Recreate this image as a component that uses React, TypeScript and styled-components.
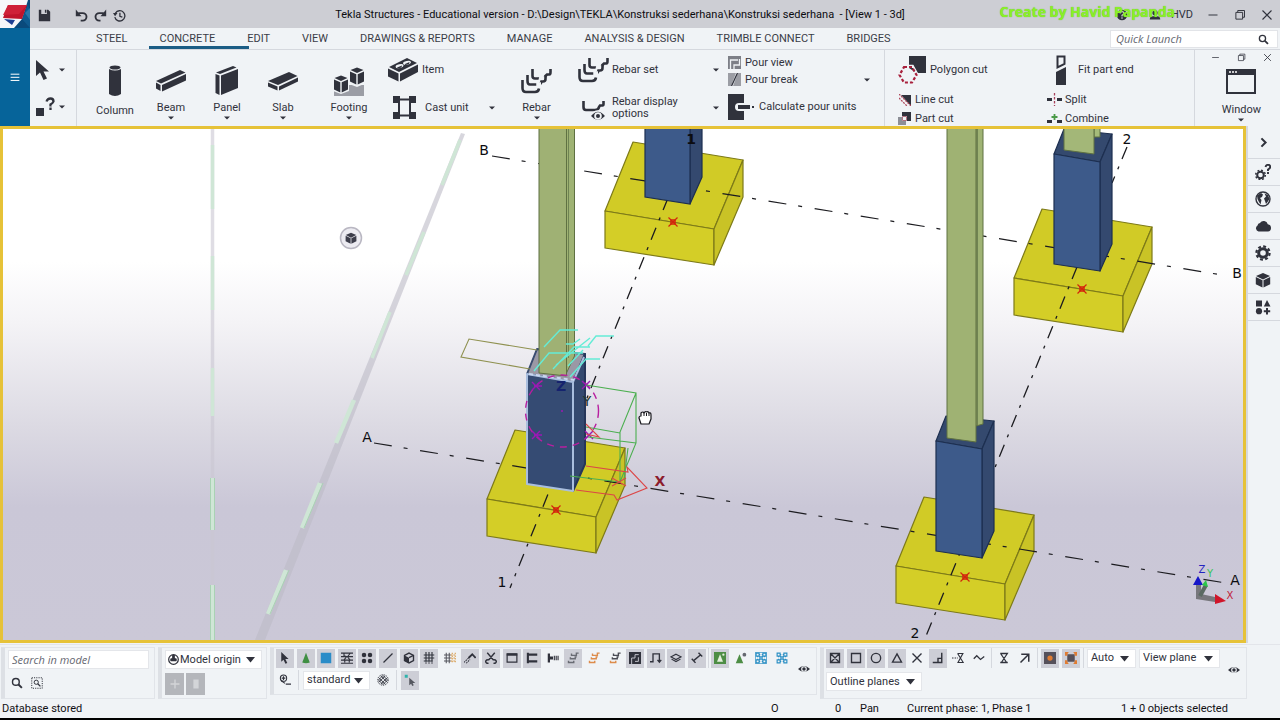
import React, { ReactNode } from "react";
import styled, { createGlobalStyle, css } from "styled-components";

const ink = "#30323c";
const panel = "#f0f3f6";
const line = "#d5d8de";
const pressed = "#cdced6";
const humanist = `"Open Sans", "Noto Sans", sans-serif`;

const GlobalStyle = createGlobalStyle`
  * { box-sizing: border-box; }
  body { margin: 0; background: ${panel}; color: ${ink}; font: 11px/14px Roboto, "Noto Sans", sans-serif; }
  button, input, select { font: inherit; color: inherit; border: 0; padding: 0; margin: 0; background: none; }
  svg { display: block; flex: none; }
`;

/* ---------- page frame ---------- */

const Page = styled.div`
  display: flex;
  flex-direction: column;
  min-height: 100vh;
  min-width: 1240px;
`;
const Header = styled.header`
  display: flex;
  flex: none;
`;
const Brand = styled.div`
  display: flex;
  flex-direction: column;
  width: 30px;
  background: #06649a;
`;
const FileMenu = styled.button`
  flex: 1;
  display: grid;
  place-items: center;
  color: #fff;
`;
const HeaderMain = styled.div`
  flex: 1;
  min-width: 0;
`;

/* ---------- title bar ---------- */

const TitleBar = styled.div`
  position: relative;
  display: flex;
  align-items: center;
  height: 28px;
  padding-top: 2px;
  background: #cdced4;
`;
const QuickAccess = styled.div`
  display: flex;
  align-items: center;
  gap: 6px;
  width: 120px;
  padding-left: 8px;
`;
const QuickButton = styled.button<{ $wideAfter?: boolean }>`
  margin-right: ${(p) => (p.$wideAfter ? 18 : 0)}px;
`;
const Title = styled.h1`
  flex: 1;
  margin: 0;
  padding-right: 14px;
  font: inherit;
  line-height: 26px;
  color: #0c0c10;
  text-align: center;
  white-space: pre;
`;
const Account = styled.div`
  display: flex;
  align-items: center;
  width: 176px;
`;
const AccountIcon = styled.span`
  margin: 0 5px 0 12px;
`;
const UserIcon = styled.span`
  margin: 0 10px 0 16px;
`;
const UserName = styled.span`
  width: 36px;
`;
const Watermark = styled.span`
  position: absolute;
  right: 105px;
  top: 3px;
  font: bold 14px/18px ${humanist};
  color: #8af028;
  text-shadow: 0 0 1px #5fb81c;
  white-space: nowrap;
`;
const WindowButtons = styled.div<{ $small?: boolean }>`
  display: flex;
  gap: ${(p) => (p.$small ? 17 : 15)}px;
  ${(p) =>
    p.$small &&
    css`
      padding: 2px 0 7px 0;
    `}
`;

/* ---------- tabs ---------- */

const TabBar = styled.nav`
  display: flex;
  align-items: center;
  height: 22px;
  padding: 1px 2px 0 50px;
  border-bottom: 1px solid ${line};
`;
const Tab = styled.button<{ $active?: boolean }>`
  position: relative;
  padding: 0 16px;
  line-height: 20px;
  color: #3b3d47;
  white-space: nowrap;
  ${(p) =>
    p.$active &&
    css`
      &::after {
        content: "";
        position: absolute;
        left: 5px;
        bottom: 0;
        width: 100px;
        height: 3px;
        background: #1b5d85;
      }
    `}
`;
const QuickLaunch = styled.label`
  display: flex;
  align-items: center;
  width: 168px;
  height: 18px;
  margin-left: auto;
  padding: 0 8px 0 5px;
  background: #fff;
  border: 1px solid #e2e4e8;
`;
const ItalicInput = styled.input`
  flex: 1;
  min-width: 0;
  font: italic 11px/16px ${humanist};
  outline: 0;
  &::placeholder {
    color: #666872;
    opacity: 1;
  }
`;

/* ---------- ribbon ---------- */

const Ribbon = styled.div`
  display: flex;
  height: 76px;
`;
const RibbonGroup = styled.section<{ $grow?: boolean; $pad?: number }>`
  display: flex;
  padding: 1px 0 0 ${(p) => p.$pad ?? 0}px;
  border-right: 1px solid ${line};
  ${(p) => p.$grow && "flex: 1;"}
  &:last-child {
    border-right: 0;
  }
`;
const SelectTools = styled.div`
  display: grid;
  grid-template-rows: 37px 37px;
  width: 46px;
  padding-left: 6px;
`;
const ToolButton = styled.button`
  display: flex;
  align-items: center;
  justify-content: space-between;
  width: 29px;
`;
const BigButton = styled.button<{ $w: number }>`
  display: flex;
  flex-direction: column;
  align-items: center;
  width: ${(p) => p.$w}px;
  padding-top: 12px;
`;
const BigIcon = styled.span`
  display: grid;
  place-items: center;
  height: 36px;
`;
const PlainLabel = styled.span`
  padding-top: 5px;
`;
const SplitLabel = styled.span`
  display: flex;
  flex-direction: column;
  align-items: center;
  gap: 1px;
  padding-top: 2px;
`;
const Stack = styled.div<{ $w: number }>`
  display: flex;
  flex-direction: column;
  gap: 1px;
  width: ${(p) => p.$w}px;
`;
const RowButton = styled.button<{ $h: number }>`
  display: flex;
  align-items: center;
  height: ${(p) => p.$h}px;
  text-align: left;
  line-height: 12px;
`;
const RowIcon = styled.span<{ $w: number }>`
  display: grid;
  place-items: center;
  width: ${(p) => p.$w}px;
  margin-right: 3px;
`;
const RowArrow = styled.span`
  margin-left: auto;
`;
const PourStack = styled(Stack)`
  gap: 0;
  margin: 0 14px 0 8px;
  padding-top: 3px;
`;
const CutGrid = styled.div`
  display: grid;
  grid-template-columns: 150px auto;
  grid-template-rows: 38px 21px 17px;
  justify-content: start;
`;
const WindowPanel = styled.div`
  display: flex;
  flex-direction: column;
  align-items: center;
  width: 85px;
  padding-left: 8px;
`;
const WindowButton = styled.button`
  display: flex;
  flex-direction: column;
  align-items: center;
  gap: 7px;
`;

/* ---------- work area ---------- */

const WorkArea = styled.main`
  display: flex;
  flex: 1;
  min-height: 518px;
  padding-bottom: 1px;
`;
const Viewport = styled.section`
  flex: 1;
  min-width: 0;
  display: flex;
  border: 3px solid #e6c238;
  background: linear-gradient(#fff 0%, #fff 26%, #f4f3f6 38%, #dcdae3 58%, #cac7d7 74%, #cbc8d7 100%);
`;
const Scene = styled.svg`
  flex: 1;
  width: 100%;
  min-width: 0;
  font: 14px/1 "DejaVu Sans", sans-serif;
`;
const SideBar = styled.aside`
  display: flex;
  flex-direction: column;
  width: 34px;
  border-left: 2px solid ${line};
`;
const SideButton = styled.button`
  display: grid;
  place-items: center;
  height: 27px;
  padding-right: 2px;
  border-bottom: 1px solid ${line};
  &:first-child {
    height: 33px;
  }
`;

/* ---------- bottom tool bars ---------- */

const BottomBar = styled.div`
  display: flex;
  align-items: flex-start;
  height: 54px;
  padding: 2px 0 0 1px;
  border-top: 1px solid #e3e5ea;
`;
const DockPanel = styled.section<{ $w: number; $h: number; $tight?: boolean }>`
  display: flex;
  flex-direction: column;
  width: ${(p) => p.$w}px;
  height: ${(p) => p.$h}px;
  margin-right: 3px;
  padding: ${(p) => (p.$tight ? 0 : 2)}px 3px 0 ${(p) => (p.$tight ? 2 : 3)}px;
  border: 1px solid #e1e4e9;
  border-left: 4px solid #dde0e5;
  gap: 4px;
`;
const DockColumns = styled.div`
  display: flex;
  align-items: center;
  justify-content: space-between;
`;
const DockRows = styled.div<{ $gap: number }>`
  display: flex;
  flex-direction: column;
  gap: ${(p) => p.$gap}px;
`;
const SearchField = styled.label`
  display: flex;
  width: 141px;
  height: 19px;
  padding: 0 3px;
  background: #fff;
  border: 1px solid #e4e6ea;
`;
const ButtonRow = styled.div<{ $gap?: number }>`
  display: flex;
  align-items: center;
  gap: ${(p) => p.$gap ?? 2}px;
`;
const SpreadRow = styled.div<{ $w: number }>`
  display: flex;
  justify-content: space-between;
  width: ${(p) => p.$w}px;
`;
const IconButton = styled.button<{ $on?: boolean }>`
  display: grid;
  place-items: center;
  width: 18px;
  height: 19px;
  background: ${(p) => (p.$on ? pressed : "none")};
`;
const DisabledButton = styled(IconButton)`
  width: 19px;
  height: 22px;
  background: #b4b6bb;
  color: #d3d5d8;
`;
const Divider = styled.span`
  width: 1px;
  height: 20px;
  background: ${line};
`;
const SelectBox = styled.label<{ $w: number }>`
  position: relative;
  display: flex;
  align-items: center;
  width: ${(p) => p.$w}px;
  height: 19px;
  padding-left: 2px;
  background: #fff;
  border: 1px solid #e4e6ea;
  select {
    flex: 1;
    min-width: 0;
    height: 17px;
    padding-left: 1px;
    appearance: none;
    outline: 0;
  }
`;
const SelectArrow = styled.svg`
  position: absolute;
  right: 6px;
  top: 6px;
  pointer-events: none;
`;

/* ---------- status bar ---------- */

const StatusBar = styled.footer`
  display: grid;
  grid-template-columns: 1fr 64px 25px 47px 214px 159px;
  height: 22px;
  padding: 1px 0 0 2px;
  border-bottom: 2px solid #000;
  line-height: 20px;
  color: #101014;
`;

/* ---------- icons ---------- */

const cube = (
  <g>
    <path d="M8 1 15 4 8 7.500 1 4z" />
    <path d="M.8 5 7.500 8.300V15.500L.8 12.200z" />
    <path d="M15.200 5 8.500 8.300V15.500L15.200 12.200z" />
  </g>
);
const stroke = (d: string, w = 1.5, c = "currentColor") => <path d={d} fill="none" stroke={c} strokeWidth={w} />;
const eye = (
  <g>
    <path d="M0 8Q8 0 16 8 8 16 0 8z" />
    <circle cx="8" cy="8" r="3.800" fill="#f0f3f6" />
    <circle cx="8" cy="8" r="2.300" />
  </g>
);
const bars = (a: string, b: string) => (
  <g fill="none" strokeWidth="1.900">
    <path d="M6 2V4.500H12.500V1.500H15.500" stroke={a} />
    <path d="M4.500 7V9H11V6.500H13" stroke={a} />
    <path d="M2 11.500V14H9V11.500" stroke={b} />
  </g>
);
const gear = (
  <g>
    <circle cx="8" cy="8" r="4.300" fill="none" stroke="currentColor" strokeWidth="3" />
    <circle cx="8" cy="8" r="6.600" fill="none" stroke="currentColor" strokeWidth="2.200" strokeDasharray="2.900 2.280" />
  </g>
);
const lens = (
  <g fill="none" stroke="currentColor" strokeWidth="1.900">
    <circle cx="6.500" cy="6.500" r="4.500" />
    <path d="M10 10 14.500 14.500" strokeWidth="2.600" />
  </g>
);
const pointer = <path d="M3 0V13L6 10.300 8.600 15.800 11 14.800 8.500 9.300H12.800z" />;
const snapGrid = (c: string) => (
  <g fill="none" stroke={c} strokeWidth="1.500">
    <path d="M1.500 1.500h4v4h-4zM10.500 1.500h4v4h-4zM1.500 10.500h4v4h-4zM10.500 10.500h4v4h-4zM5.500 3.500h1.500M9 3.500h1.500M5.500 12.500h1.500M9 12.500h1.500M3.500 5.500v1.500M3.500 9v1.500M12.500 5.500v1.500M12.500 9v1.500" />
    <path d="M5.500 5.500 7 7M10.500 5.500 9 7M5.500 10.500 7 9M10.500 10.500 9 9M6.500 6.500h3v3h-3z" />
  </g>
);
const rebar = (
  <g fill="none" stroke="currentColor" strokeWidth="2.600">
    <path d="M11.500 1V8Q11.500 10.500 14 10.500H21Q24 10.500 24.500 8L26 6.500H28.500Q29.500 6.500 29.500 4V1" />
    <path d="M6.500 7V13Q6.500 16 9 16H17Q20 16 20 13L20.500 11H24" stroke="#f0f3f6" strokeWidth="5.500" />
    <path d="M6.500 7V13Q6.500 16.500 9 16.500H17Q20 16.500 20.500 13.500H22Q24.500 13.500 24.500 11V7.500" />
    <path d="M1.500 13V20Q1.500 24 5 24H15Q18 24 18 21V17H20" stroke="#f0f3f6" strokeWidth="5.500" />
    <path d="M1.500 12V20Q1.500 24 5 24H14Q17.500 24 18 20.500" />
  </g>
);

const glyphs: Record<string, ReactNode> = {
  save: <path fillRule="evenodd" d="M1 1H4V6H11V1H12.500L15 3.500V15H1zM8.500 1H10.300V4.500H8.500z" />,
  undo: <g>{stroke("M4 5H9.500A4.600 4.600 0 0 1 9.500 14.300H7", 2.3)}<path d="M1 .5V8.800H8z" /></g>,
  redo: <g>{stroke("M12 5H6.500A4.600 4.600 0 0 0 6.500 14.300H8", 2.3)}<path d="M15 .5V8.800H8z" /></g>,
  history: <g>{stroke("M3 5A6.300 6.300 0 1 1 2.200 10M8.500 4.500V9L11.500 10", 1.6)}<path d="M0 5H5.500L2.500 9z" /></g>,
  help: <g><circle cx="8" cy="8" r="7" />{stroke("M5.500 6Q6 3.500 8 3.500 10.500 3.500 10.500 6 10 7.500 8 8.500V10M8 11V13", 1.6, "#cdced4")}</g>,
  user: <g><circle cx="8" cy="5" r="3.500" /><path d="M1 14Q1 9.500 5 9.500H11Q15 9.500 15 14z" /></g>,
  min: stroke("M2 8H14", 1.3),
  restore: stroke("M2.500 4.500H11.500V13.500H2.500zM5 4.500V2H14V11H11.500", 1.3),
  close: stroke("M2 2 14 14M14 2 2 14", 1.5),
  menu: stroke("M1 3.500H15M1 8.500H15M1 13.500H15", 1.6),
  search: lens,
  pointer,
  cube: <g>{cube}</g>,
  gear,
  eye,
  chevron: stroke("M5 2 11 8 5 14", 3),
  gearHelp: (
    <g>
      <circle cx="5.500" cy="11" r="3.300" fill="none" stroke="currentColor" strokeWidth="2" />
      <circle cx="5.500" cy="11" r="4.800" fill="none" stroke="currentColor" strokeWidth="1.500" strokeDasharray="1.900 1.870" />
      {stroke("M10.500 3Q11 .8 13 .8 15.300 .8 15.200 3.200 15 4.500 13 5.500V7M13 8V10", 1.9)}
    </g>
  ),
  globe: (
    <g>
      <circle cx="8" cy="8" r="7" fill="none" stroke="currentColor" strokeWidth="1.400" />
      <path d="M2 4.500 6 2 8 3.500 7 6 5 7 6.500 9 5.500 13.500 4 11 2.500 8zM9.500 2.500 13 4 14.500 8 12.500 11 11 13 10 10 9 7.500 11 5.500z" />
    </g>
  ),
  cloud: <path d="M3.500 13.500A3.300 3.300 0 0 1 2.500 7.500 3 3 0 0 1 5 5 4.300 4.300 0 0 1 12.800 6.200 3.700 3.700 0 0 1 13 13.500z" />,
  shapes: <g><path d="M1 1.500H7V7.500H1zM12 1 15.500 7.500H8.800zM11 9H13V11.200H15.200V13.200H13V15.400H11V13.200H8.800V11.200H11z" /><circle cx="4" cy="12.200" r="3.100" /></g>,
  areaSearch: <g><path d="M1 1H15V15H1z" fill="none" stroke="currentColor" strokeWidth="1.300" strokeDasharray="1.500 1.500" /><circle cx="7" cy="7" r="2.800" fill="none" stroke="currentColor" strokeWidth="1.300" />{stroke("M9 9 12.500 12.500", 1.8)}</g>,
  origin: <g><circle cx="8" cy="8" r="7" fill="none" stroke="currentColor" strokeWidth="1.800" /><path d="M6 1.500H10V6H12Q14 8.500 12 10.500H4Q2 8.500 4 6H6z" /></g>,
  plus: stroke("M8 2V14M2 8H14", 1.8),
  slab: <path d="M4.500 2H11.500V14H4.500z" />,
  cone: <path d="M8 1 13 14Q8 16 3 14z" fill="#3f8f43" />,
  blueBox: <path d="M1 1H15V15H1z" fill="#2a8cc8" />,
  waves: stroke("M0 1.500H16M0 6.200H16M0 10.800H16M0 15H16M4 2V5L7 6M12 2 9 6M4 10.500 7 7M12 10.500 9 7M5 14V11M11 14V11", 1.5),
  dots: <g><circle cx="4" cy="4" r="3" /><circle cx="12" cy="4" r="3" /><circle cx="4" cy="12" r="3" /><circle cx="12" cy="12" r="3" /></g>,
  slash: stroke("M2 14 14 2", 1.7),
  openCube: <g>{stroke("M2 4.500 8 1.500 14 4.500V11.500L8 14.500 2 11.500z", 1.8)}<path d="M2 4.500 8 7.500V14.500L2 11.500z" />{stroke("M8 7.500 14 4.500", 1.6)}</g>,
  grid: <g>{stroke("M4 0V13M8 0V13M12 0V13M1 4H15M1 8H15M1 12H13", 1.5)}<path d="M4 13V16M8 13V16M12 13V16" stroke="currentColor" strokeWidth="1" /></g>,
  gridDots: <g>{stroke("M3 1V15M7 1V15M0 4H9M0 8H9M0 12H9", 1.4, "#55565e")}<path d="M11 1V15M15 1V15M9 4H16M9 8H16M9 12H16" stroke="#d79a4a" strokeDasharray="2 1.500" fill="none" strokeWidth="1.400" /></g>,
  weld: <g>{stroke("M6 8 11 3 15.500 8", 2.4)}<path d="M0 14 7 7M3 15 8 10" stroke="currentColor" strokeWidth="1.400" strokeDasharray="2 1.200" /></g>,
  cut: stroke("M3 1 11.500 11M13 1 4.500 11M4.500 11A2.200 2.200 0 1 0 4.600 14.500M11.500 11A2.200 2.200 0 1 1 11.400 14.500", 1.9),
  view: <g>{stroke("M1.500 2.500H14.500V13.500H1.500z", 1.6)}<path d="M1 2H15V5H1z" /></g>,
  clamp: stroke("M2.500 1V15M3 3.500H15M3 12.500H15", 2.8),
  bolt: <g><path d="M1 2H4V14H1zM4 6H8V10H4zM9 5H10.500V11H9zM11.500 5H13V11H11.500zM14 5H15.500V11H14z" /></g>,
  barsGray: bars("#6a6c74", "#6a6c74"),
  barsOrange: bars("#dd8c4c", "#dd8c4c"),
  barsMixed: bars("#4a4c55", "#dd8c4c"),
  pour: <g><path d="M0 0H16V16H0z" />{stroke("M3.500 16V8H8V3.500H13M8 12.500H12.500V7", 1.2, "#cdced6")}</g>,
  hook: stroke("M0 13H4V2.500H12.500V13M10 10.500 12.500 13.500 15 10.500", 1.8),
  layers: stroke("M8 3 14.500 6.500 8 10 1.500 6.500zM2 9.500 8 12.800 14 9.500", 1.5),
  dimension: stroke("M3.500 11.500 12.500 4M1 9 6 14.500M10 1 15 6", 1.9),
  assembly: <g><path d="M0 0H16V16H0z" fill="#4d8d45" /><path d="M8 3 12 13H4z" fill="#e4f0dc" /><circle cx="12.500" cy="3.500" r="1.500" fill="#e4f0dc" /></g>,
  assemblyObj: <g><path d="M6 3 11 15H1z" fill="#4d8d45" /><circle cx="12.500" cy="3.500" r="2.500" fill="#666871" /></g>,
  snapAll: <g>{snapGrid("#2b8fc4")}<path d="M.5 .5H15.500V15.500H.5z" fill="none" stroke="#2b8fc4" /></g>,
  snapFew: snapGrid("#2b8fc4"),
  filter: <g><circle cx="6" cy="5.500" r="4.200" fill="none" stroke="currentColor" strokeWidth="1.400" />{stroke("M3.500 5.500H8.500M6 3V8M3 9 8 12.500M9 13.500H16", 1.5)}</g>,
  mesh: <g stroke="currentColor" strokeWidth="1.200" fill="none"><circle cx="8" cy="8" r="7" strokeDasharray="1.800 1.200" /><path d="M2.500 5 11 13.500M5 2.500 13.500 11M11 2.500 2.500 11M13.500 5 5 13.500M2 8 8 2 14 8 8 14z" /></g>,
  hover: <g><path d="M1 1H5V5H1z" fill="#2fb3ac" /><path d="M7 5V15L9.500 13 11 16 13 15 11.500 12H15z" fill="#55575f" /></g>,
  snapBox: stroke("M2 2H14V14H2zM2 2 14 14M14 2 2 14", 1.8),
  snapSquare: stroke("M2 2H14V14H2z", 1.8),
  snapCircle: <circle cx="8" cy="8" r="6.200" fill="none" stroke="currentColor" strokeWidth="1.800" />,
  snapTri: stroke("M8 2.500 14 13.500H2z", 1.8),
  snapX: stroke("M2 2 14 14M14 2 2 14", 1.8),
  perp: stroke("M13 1V14H1M13 8.500H8V14", 1.9),
  extension: <g>{stroke("M7.500 2H14.500L8 14H15L7.500 2", 1.5)}<path d="M0 8H8" stroke="currentColor" strokeWidth="1.500" strokeDasharray="2 1.500" /></g>,
  zigzag: stroke("M1 9 5 5 10 10 15 6", 1.7),
  hourglass: stroke("M3.500 2H12.500L4.500 14H11.500L3.500 2M3 2H13M3 14H13", 1.7),
  arrowUp: stroke("M3 3H13V13M13 3 2 14", 2),
  planeA: <g><path d="M0 0H16V16H0z" fill="#55505a" /><circle cx="8" cy="8" r="3.500" fill="#e07c32" /></g>,
  planeB: <g><path d="M3 3H13V13H3z" fill="#55505a" /><path d="M0 0H5L3 3V5H0zM16 0H11L13 3V5H16zM0 16H5L3 13V11H0zM16 16H11L13 13V11H16z" fill="#e07c32" /></g>,
};

const Glyph = ({ name, size = 12 }: { name: string; size?: number }) => (
  <svg width={size} height={size} viewBox="0 0 16 16" fill="currentColor" aria-hidden="true">
    {glyphs[name]}
  </svg>
);

const Art = ({ w, h, children }: { w: number; h: number; children: ReactNode }) => (
  <svg width={w} height={h} viewBox={`0 0 ${w} ${h}`} fill={ink} color={ink} aria-hidden="true">
    {children}
  </svg>
);

const Caret = () => (
  <svg width="6" height="4" viewBox="0 0 6 4" aria-hidden="true">
    <path d="M0 .5H6L3 3.500z" fill={ink} />
  </svg>
);

const art = {
  logo: (
    <svg width="30" height="28" viewBox="0 0 30 28" aria-hidden="true">
      <path d="M0 0H30V28H0z" fill="#f6f7fa" />
      <path d="M14 28 22 19 28 0H30V28z" fill="#0a4a7c" />
      <path d="M22 19 28 4 30 12V28z" fill="#0f5a8f" />
      <path d="M25 13 30 8V20z" fill="#2b77aa" />
      <path d="M8 5 27 5 22 19 3 18z" fill="#c0142c" />
      <path d="M8 5 27 5 19 14 3 15z" fill="#cf2038" />
      <path d="M4 19 15 20 12 25z" fill="#1e3f92" />
    </svg>
  ),
  column: <Art w={12} h={32}><path d="M0 4V29Q6 33 12 29V4Q6 7 0 4z" /><ellipse cx="6" cy="2.500" rx="5.500" ry="2" /></Art>,
  beam: (
    <Art w={32} h={24}>
      <path d="M1 12 25 1 30.500 3.500 6 14.500z" /><path d="M1 13.500 5.500 16V22L1 19.500z" /><path d="M7 16 31 5V11.500L7 22.500z" />
    </Art>
  ),
  panel: (
    <Art w={24} h={32}>
      <path d="M1 7.500 18 1 21.500 2.500 5 9z" /><path d="M.5 9 4.500 10.500V30L.5 28z" /><path d="M6 10.500 23 4V23L6 30z" />
    </Art>
  ),
  slab: (
    <Art w={32} h={20}>
      <path d="M1 10 22 1 30.500 5 11 14z" /><path d="M1 11.500 10.500 15.500V19.500L1 15.500z" /><path d="M12 15.500 31 6.500V10.500L12 19.500z" />
    </Art>
  ),
  footing: (
    <Art w={32} h={30}>
      <path d="M1 19H31V30H1z" fill="#9b9da5" />
      <path d="M16 3H31V18L24 21 16 18z" fill={panel} />
      <path d="M0 12H16V25L8 28 0 25z" fill={panel} />
      <path d="M24 1.500 30.500 4 24 7 17.500 4zM17 5.500 23.300 8.300V18.500L17 15.500zM31 5.500 24.700 8.300V18.500L31 15.500zM8 9.500 14.500 12 8 15 1.500 12zM1 13.500 7.300 16.300V26.500L1 23.500zM15 13.500 8.700 16.300V26.500L15 23.500z" />
    </Art>
  ),
  item: (
    <Art w={30} h={24}>
      <path d="M1 9 19 0 29 5 11 14z" /><path d="M0 10.500 10.500 15.500V23.500L0 18.500z" /><path d="M12 15.500 30 6.500V14L12 23.500z" />
      <ellipse cx="11.500" cy="8.200" rx="4" ry="1.900" fill={panel} transform="rotate(-12 11.500 8)" />
      <ellipse cx="19" cy="4.800" rx="4" ry="1.900" fill={panel} transform="rotate(-12 19 4.800)" />
      <path d="M9 9.500 14 7.500 13.500 9.500 10 10.500zM16.500 6.200 21.500 4 21 6.200 17.500 7z" />
    </Art>
  ),
  castUnit: (
    <Art w={23} h={23}>
      <path d="M0 0H7V7H0zM16 0H23V7H16zM0 16H7V23H0zM16 16H23V23H16z" />
      {stroke("M6 3V20M17 3V20M5 3.500H18M5 19.500H18", 2)}
    </Art>
  ),
  rebar: <Art w={31} h={26}>{rebar}</Art>,
  rebarDisplay: (
    <Art w={24} h={26}>
      {stroke("M1.500 6V12Q1.500 15 4 15H13Q16.500 15 17 12L18 10.500H20.500Q21.500 10.500 21.500 9V6", 2.6)}
      <path d="M8 21Q16 11 24 21 16 30 8 21z" stroke={panel} strokeWidth="1.500" />
      <circle cx="16" cy="21" r="3.800" fill={panel} /><circle cx="16" cy="21" r="2" />
    </Art>
  ),
  pourView: <Art w={13} h={13}><path d="M0 0H13V13H0z" fill="#7d7f87" />{stroke("M2.500 13V4H10M11.500 3V9H6V13", 1.3, panel)}</Art>,
  pourBreak: <Art w={13} h={13}><path d="M0 0H8L3 13H0zM10 0H13V13H5z" fill="#9b9da4" />{stroke("M9.500 0 3.500 13", 1.3)}</Art>,
  calcPour: (
    <Art w={27} h={26}>
      <path d="M0 0H16V9H11Q7 9 7 13T11 17H16V26H0z" /><path d="M10 11H22V15H10z" /><path d="M24 12H26V14H24z" />
    </Art>
  ),
  polygonCut: (
    <Art w={28} h={28}>
      <path d="M11 0H28V17H19L15 9H11z" />
      {stroke("M6 11H14L18.500 19 14 26.500H6L1.500 19z", 4.5, panel)}
      <path d="M11 12H15L17 16z" />
      <path d="M6 11H14L18.500 19 14 26.500H6L1.500 19z" fill="none" stroke="#a8203c" strokeWidth="2.200" strokeDasharray="3 2" />
    </Art>
  ),
  lineCut: <Art w={12} h={12}><path d="M2 1H12V12z" /><path d="M0 0 12 12M0 4 8 12" stroke="#b0485c" strokeWidth="1.300" strokeDasharray="2 1" /></Art>,
  partCut: <Art w={13} h={13}><path d="M0 5H4V9H8V13H0z" fill="#8d8f97" /><path d="M4 0H13V9H9V4H4z" />{stroke("M4.500 4.500H8.500V8.500H4.500z", 1, "#b07080")}</Art>,
  fitEnd: <Art w={10} h={30}>{stroke("M1.500 12.500V1.500H8.500V9z", 2)}<path d="M0 17 10 12V30H0z" /></Art>,
  split: <Art w={15} h={13}><path d="M0 5H5V8H0zM10 5H15V8H10z" /><path d="M7.500 0V13" stroke="#a8405a" strokeWidth="1.300" strokeDasharray="2.500 1.500" /></Art>,
  combine: <Art w={15} h={13}><path d="M0 8H5V11H0zM10 8H15V11H10z" />{stroke("M7.500 2V8M4.500 5H10.500", 1.8, "#4a9a48")}</Art>,
  window: (
    <Art w={30} h={25}>
      {stroke("M1 1H29V24H1z", 2)}<path d="M0 0H30V6H0z" />
      <path d="M3 3H5M6 3H8M9 3H11" stroke="#fff" strokeWidth="1.500" />
    </Art>
  ),
  pointer: <Art w={14} h={20}><path d="M0 0V16L4 12.500 7.500 20 11 18.500 7.500 11.500H13z" /></Art>,
  inquire: (
    <Art w={19} h={20}>
      <path d="M0 11H8V19H0z" />
      {stroke("M10.500 4.500Q11.500 1.500 14.500 1.500 17.500 1.500 17.500 4.500 17 6 14.500 7.500V9.500M14.500 10.500V13", 2.3)}
    </Art>
  ),
};

/* ---------- model scene ---------- */

const Footing = ({ x, y }: { x: number; y: number }) => (
  <g transform={`translate(${x} ${y})`} stroke="#7d7a18" strokeWidth="1.200" strokeLinejoin="round">
    <path d="M28-69 138-51 109 18 0 0z" fill="#d1cb26" />
    <path d="M0 0 109 18V54L0 37z" fill="#d4ce27" />
    <path d="M138-51V-14L109 54V18z" fill="#c9c326" />
  </g>
);
const Cross = ({ x, y }: { x: number; y: number }) => (
  <g transform={`translate(${x} ${y})`} stroke="#d3240c" fill="none">
    <path d="M-4.500-4.500 4.500 4.500M4.500-4.500-4.500 4.500" strokeWidth="1.200" />
    <path d="M-2-2H2V2H-2z" strokeWidth="1.500" />
  </g>
);
const Pedestal = ({ x, y, selected }: { x: number; y: number; selected?: boolean }) => (
  <g transform={`translate(${x} ${y})`} stroke={selected ? "#a9bede" : "#1d2f50"} strokeWidth={selected ? 2 : 1.2} strokeLinejoin="round">
    <path d="M40-124 50-149 98-144 86-116z" fill={selected ? "#9a98a5" : "#34496e"} stroke={selected ? "#3a4c70" : "#1d2f50"} />
    <path d="M86-116 98-144V-34L86-7z" fill="#34496f" stroke={selected ? "#26365a" : "#1d2f50"} />
    <path d="M40-124 86-116V-7L40-14z" fill={selected ? "#354b73" : "#3d5a8a"} />
    {selected && <path d="M86-116 97-141" fill="none" />}
  </g>
);
const gridDash = { stroke: "#1c1c20", strokeWidth: 1.2, strokeDasharray: "18 12 4 12.700", fill: "none" };
const steepDash = { stroke: "#1c1c20", strokeWidth: 1.3, strokeDasharray: "13 8 3 8", fill: "none" };

const ModelScene = () => (
  <Scene viewBox="3 129 1240 511" preserveAspectRatio="xMidYMid slice" role="img" aria-label="3d model view">
    {/* clip plane edges */}
    <g fill="none" stroke="#cac7d2" strokeOpacity=".6">
      <path d="M212.500 129V640" strokeWidth="3.500" />
      <path d="M461 133 255 640 265 640 465 134z" fill="#bdbac7" fillOpacity=".6" stroke="none" />
    </g>
    <g stroke="#cfe6d6" strokeWidth="3.500">
      <path d="M212.500 145V209M212.500 256V310M212.500 368V416M212.500 478V530M212.500 585V640" />
      <path d="M460 140 442 185M424 232 406 275M390 312 372 358" />
      <path d="M354 400 336 443M320 483 302 528M286 570 268 614" strokeWidth="4.500" />
    </g>
    <g stroke="#a9d2b4" strokeWidth="1">
      <path d="M210.500 478V530M214.500 478V530M210.500 585V640M214.500 585V640M323 483 304 528M289 570 270 614" />
    </g>

    <Footing x={605} y={211} />
    <Footing x={1014} y={278} />
    <Footing x={487} y={499} />
    <Footing x={896} y={566} />

    <path d="M492 156 1222 275" {...gridDash} />
    <path d="M374 443 1226 583" {...gridDash} />
    <path d="M668 198 510 588" {...steepDash} />
    <path d="M1127 147 1112 183M1077 267 926 636" {...steepDash} />

    <Cross x={673} y={222} />
    <Cross x={1082} y={289} />
    <Cross x={556} y={510} />
    <Cross x={965} y={577} />

    <g stroke="#1d2f50" strokeWidth="1.200">
      <path d="M690 120H702V177L690 204z" fill="#34496f" />
      <path d="M645 120H690V204L645 197z" fill="#3d5a8a" />
    </g>
    <Pedestal x={1014} y={278} />
    <Pedestal x={487} y={498} selected />
    <Pedestal x={896} y={565} />

    {/* steel posts */}
    <g stroke="#5f7142" strokeWidth="1">
      <path d="M566 120H574.500V356L566 374z" fill="#9fb374" />
      <path d="M539 120H566.500V376L539 373z" fill="#9fb174" />
      <path d="M568.500 129V358" stroke="#6f8352" />
      <path d="M976 120H983V424L976 426z" fill="#9fb374" />
      <path d="M947 120H976V442L947 438z" fill="#9fb273" />
      <path d="M977.500 129V425" stroke="#6f8352" />
      <path d="M1094 120H1100V137H1094z" fill="#a5bb7a" />
      <path d="M1064 120H1094V154L1064 150z" fill="#a3b778" />
    </g>

    {/* selection handles and dimensions */}
    <g fill="none" strokeWidth="1.100">
      <path d="M537 350 469 339 461 357 530 369" stroke="#8f9150" />
      <path d="M544 347 560 330H578M566 344H573L580 339M588 346 596 336H614M556 365 590 338M534 371 549 353H583M600 359H586L570 377M553 369 574 347H590M568 366 583 350" stroke="#64ecd6" strokeWidth="1.400" />
      <path d="M529 374 574 380" stroke="#c8d6ee" strokeDasharray="4 3" strokeWidth="2" />
      <ellipse cx="562" cy="411" rx="36.500" ry="36" stroke="#b81fa0" strokeWidth="1.400" strokeDasharray="7 6" />
      <path d="M532 382 540 390M540 382 532 390M534 386H542M532 431 540 439M540 431 532 439M534 435H542M582 381 590 389M590 381 582 389M585 431 593 439M593 431 585 439M561 411H563" stroke="#9a19b4" strokeWidth="1.400" />
      <path d="M586 385 636 393V443L620 482V432L636 393M586 427 620 433M588 437 636 443M620 482 570 476M624 480 628 448" stroke="#4caf50" />
      <path d="M586 466 628 472 627 467 647 488 617 500 614 495 576 490M586 424 599 437 586 434M612 478 626 486M626 478 612 486" stroke="#dc4747" />
    </g>

    <g fill="#0c0c10" textAnchor="middle">
      <text x="484" y="155">B</text>
      <text x="1237" y="278">B</text>
      <text x="367" y="442">A</text>
      <text x="1235" y="585">A</text>
      <text x="502" y="587">1</text>
      <text x="691" y="144" fontWeight="bold">1</text>
      <text x="1127" y="144">2</text>
      <text x="915" y="638">2</text>
      <text x="660" y="486" fill="#8c1c2c" fontWeight="bold">X</text>
      <text x="561" y="391" fill="#15236e" fontWeight="bold">Z</text>
      <text x="587" y="406" fill="#1f3830">Y</text>
    </g>

    {/* axis triad */}
    <g>
      <path d="M1196 585H1201V594L1215 597V602L1196 599z" fill="#77777c" />
      <path d="M1200 596 1206 585" stroke="#5a6a62" strokeWidth="4" />
      <path d="M1193 585 1198 576 1203 585z" fill="#1616c8" />
      <path d="M1202 585 1206 580 1208 587z" fill="#2bc64a" />
      <path d="M1215 594 1226 601 1215 604z" fill="#d0152a" />
      <g fontSize="10" textAnchor="middle">
        <text x="1202" y="573" fill="#2424c0">Z</text>
        <text x="1210" y="577" fill="#39c558">Y</text>
        <text x="1230" y="599" fill="#c02038">X</text>
      </g>
    </g>

    {/* view cube handle */}
    <g transform="translate(351 238)">
      <circle r="10.500" fill="#ecebf1" stroke="#b9b7c2" strokeWidth="1.500" />
      <g transform="translate(-6 -6) scale(.75)" fill="#3c3d4a">{cube}</g>
    </g>

    {/* pan cursor */}
    <path
      d="M641 424 639 418Q639 416 641 416V413Q643 411 644 413 645 411 647 412 648 411 649 413 651 412 651 415V419L649 424z"
      fill="#fff" stroke="#17171c" strokeWidth="1.200" strokeLinejoin="round"
    />
    <path d="M644 413V416M646.500 413V416M649 413V416" stroke="#17171c" />
  </Scene>
);

/* ---------- small composites ---------- */

const Big = ({ icon, label, w = 56, menu = true }: { icon: ReactNode; label: string; w?: number; menu?: boolean }) => (
  <BigButton $w={w}>
    <BigIcon>{icon}</BigIcon>
    {menu ? <SplitLabel>{label}<Caret /></SplitLabel> : <PlainLabel>{label}</PlainLabel>}
  </BigButton>
);

const Row = ({ icon, label, h = 37, iw = 31, menu }: { icon: ReactNode; label: ReactNode; h?: number; iw?: number; menu?: boolean }) => (
  <RowButton $h={h}>
    <RowIcon $w={iw}>{icon}</RowIcon>
    {label}
    {menu && <RowArrow><Caret /></RowArrow>}
  </RowButton>
);

const Picker = ({ w, label, value, icon }: { w: number; label: string; value: string; icon?: string }) => (
  <SelectBox $w={w}>
    {icon && <Glyph name={icon} size={11} />}
    <select aria-label={label} defaultValue={value}>
      <option>{value}</option>
    </select>
    <SelectArrow width="9" height="6" viewBox="0 0 9 6" aria-hidden="true">
      <path d="M0 0H9L4.500 5.500z" fill={ink} />
    </SelectArrow>
  </SelectBox>
);

type Tool = [icon: string, label: string, on?: boolean];
const Tools = ({ items }: { items: Tool[] }) => (
  <>
    {items.map(([icon, label, on]) => (
      <IconButton key={label} $on={on} aria-label={label} aria-pressed={!!on}>
        <Glyph name={icon} size={12} />
      </IconButton>
    ))}
  </>
);

const tabs = ["STEEL", "CONCRETE", "EDIT", "VIEW", "DRAWINGS & REPORTS", "MANAGE", "ANALYSIS & DESIGN", "TRIMBLE CONNECT", "BRIDGES"];

const selectTools: Tool[] = [
  ["pointer", "Select all", true], ["cone", "Select components", true], ["blueBox", "Select parts", true],
  ["waves", "Select surfaces", true], ["dots", "Select points", true], ["slash", "Select lines", true],
  ["openCube", "Select solids", true], ["grid", "Select grids", true], ["gridDots", "Select grid lines"],
  ["weld", "Select welds", true], ["cut", "Select cuts", true], ["view", "Select views", true],
  ["clamp", "Select bolts", true], ["bolt", "Select single bolts"], ["barsGray", "Select reinforcement", true],
  ["barsOrange", "Select single bars"], ["barsMixed", "Select rebar sets"], ["pour", "Select pours", true],
  ["hook", "Select loads", true], ["layers", "Select planes", true], ["dimension", "Select distances", true],
];
const assemblyTools: Tool[] = [
  ["assembly", "Select assemblies", true], ["assemblyObj", "Select objects in assemblies"],
  ["snapAll", "Select components only"], ["snapFew", "Select objects in components"],
];
const snapTools: Tool[] = [
  ["snapBox", "Snap to points", true], ["snapSquare", "Snap to end points", true], ["snapCircle", "Snap to centers", true],
  ["snapTri", "Snap to midpoints", true], ["snapX", "Snap to intersections"], ["perp", "Snap to perpendicular", true],
  ["extension", "Snap to extensions"], ["zigzag", "Snap to any position"],
];
const sideItems: [string, string][] = [
  ["chevron", "Expand side pane"], ["gearHelp", "Properties"], ["globe", "Online"], ["cloud", "Warehouse"],
  ["gear", "Settings"], ["cube", "Reference models"], ["shapes", "Applications and components"],
];

export default function App() {
  return (
    <>
      <GlobalStyle />
      <Page>
        <Header>
          <Brand>
            {art.logo}
            <FileMenu aria-label="File menu"><Glyph name="menu" size={10} /></FileMenu>
          </Brand>
          <HeaderMain>
            <TitleBar>
              <QuickAccess>
                <QuickButton aria-label="Save" $wideAfter><Glyph name="save" size={13} /></QuickButton>
                <QuickButton aria-label="Undo"><Glyph name="undo" size={13} /></QuickButton>
                <QuickButton aria-label="Redo"><Glyph name="redo" size={13} /></QuickButton>
                <QuickButton aria-label="History"><Glyph name="history" size={13} /></QuickButton>
              </QuickAccess>
              <Title>{"Tekla Structures - Educational version - D:\\Design\\TEKLA\\Konstruksi sederhana\\Konstruksi sederhana  - [View 1 - 3d]"}</Title>
              <Account>
                <AccountIcon><Glyph name="help" /></AccountIcon>
                <UserIcon><Glyph name="user" /></UserIcon>
                <UserName>HVD</UserName>
                <WindowButtons>
                  <button aria-label="Minimize"><Glyph name="min" /></button>
                  <button aria-label="Restore"><Glyph name="restore" /></button>
                  <button aria-label="Close"><Glyph name="close" /></button>
                </WindowButtons>
              </Account>
              <Watermark>Create by Havid Papanda</Watermark>
            </TitleBar>
            <TabBar>
              {tabs.map((t) => <Tab key={t} $active={t === "CONCRETE"}>{t}</Tab>)}
              <QuickLaunch>
                <ItalicInput placeholder="Quick Launch" aria-label="Quick Launch" />
                <Glyph name="search" size={11} />
              </QuickLaunch>
            </TabBar>
            <Ribbon>
              <RibbonGroup>
                <SelectTools>
                  <ToolButton aria-label="Select">{art.pointer}<Caret /></ToolButton>
                  <ToolButton aria-label="Inquire">{art.inquire}<Caret /></ToolButton>
                </SelectTools>
              </RibbonGroup>
              <RibbonGroup $pad={10}>
                <Big icon={art.column} label="Column" menu={false} />
                <Big icon={art.beam} label="Beam" />
                <Big icon={art.panel} label="Panel" />
                <Big icon={art.slab} label="Slab" />
                <Big icon={art.footing} label="Footing" w={76} />
                <Stack $w={108}>
                  <Row icon={art.item} label="Item" iw={32} />
                  <Row icon={art.castUnit} label="Cast unit" iw={35} menu />
                </Stack>
                <Big icon={art.rebar} label="Rebar" w={83} />
                <Stack $w={141}>
                  <Row icon={art.rebar} label="Rebar set" menu />
                  <Row icon={art.rebarDisplay} label={<>Rebar display<br />options</>} menu />
                </Stack>
                <PourStack $w={143}>
                  <Row icon={art.pourView} label="Pour view" h={17} iw={15} />
                  <Row icon={art.pourBreak} label="Pour break" h={17} iw={15} menu />
                  <Row icon={art.calcPour} label="Calculate pour units" h={38} iw={29} />
                </PourStack>
              </RibbonGroup>
              <RibbonGroup $grow $pad={12}>
                <CutGrid>
                  <Row icon={art.polygonCut} label="Polygon cut" h={38} iw={30} />
                  <Row icon={art.fitEnd} label="Fit part end" h={38} iw={28} />
                  <Row icon={art.lineCut} label="Line cut" h={21} iw={15} />
                  <Row icon={art.split} label="Split" h={21} iw={15} />
                  <Row icon={art.partCut} label="Part cut" h={17} iw={15} />
                  <Row icon={art.combine} label="Combine" h={17} iw={15} />
                </CutGrid>
              </RibbonGroup>
              <RibbonGroup>
                <WindowPanel>
                  <WindowButtons $small>
                    <button aria-label="Minimize view"><Glyph name="min" size={9} /></button>
                    <button aria-label="Restore view"><Glyph name="restore" size={9} /></button>
                    <button aria-label="Close view"><Glyph name="close" size={9} /></button>
                  </WindowButtons>
                  <WindowButton>{art.window}<SplitLabel>Window<Caret /></SplitLabel></WindowButton>
                </WindowPanel>
              </RibbonGroup>
            </Ribbon>
          </HeaderMain>
        </Header>

        <WorkArea>
          <Viewport><ModelScene /></Viewport>
          <SideBar>
            {sideItems.map(([icon, label]) => (
              <SideButton key={label} aria-label={label}><Glyph name={icon} size={icon === "chevron" ? 11 : 16} /></SideButton>
            ))}
          </SideBar>
        </WorkArea>

        <BottomBar>
          <DockPanel $w={154} $h={52}>
            <SearchField><ItalicInput placeholder="Search in model" aria-label="Search in model" /></SearchField>
            <ButtonRow>
              <IconButton aria-label="Search"><Glyph name="search" /></IconButton>
              <IconButton aria-label="Search in area"><Glyph name="areaSearch" /></IconButton>
            </ButtonRow>
          </DockPanel>
          <DockPanel $w={109} $h={52}>
            <Picker w={97} label="Work plane" value="Model origin" icon="origin" />
            <ButtonRow>
              <DisabledButton disabled aria-label="Add"><Glyph name="plus" /></DisabledButton>
              <DisabledButton disabled aria-label="Remove"><Glyph name="slab" /></DisabledButton>
            </ButtonRow>
          </DockPanel>
          <DockPanel $w={547} $h={48} $tight>
            <DockColumns>
              <DockRows $gap={2}>
                <ButtonRow $gap={2}>
                  <SpreadRow $w={430}><Tools items={selectTools} /></SpreadRow>
                  <Divider />
                  <SpreadRow $w={80}><Tools items={assemblyTools} /></SpreadRow>
                </ButtonRow>
                <ButtonRow $gap={4}>
                  <Tools items={[["filter", "Selection filter"]]} />
                  <Divider />
                  <Picker w={67} label="Filter" value="standard" />
                  <Tools items={[["mesh", "Snap density"]]} />
                  <Divider />
                  <Tools items={[["hover", "Hover highlight", true]]} />
                </ButtonRow>
              </DockRows>
              <IconButton aria-label="Show toolbar options"><Glyph name="eye" /></IconButton>
            </DockColumns>
          </DockPanel>
          <DockPanel $w={427} $h={52} $tight>
            <DockColumns>
              <DockRows $gap={4}>
                <ButtonRow $gap={3}>
                  <SpreadRow $w={162}><Tools items={snapTools} /></SpreadRow>
                  <Divider />
                  <SpreadRow $w={39}><Tools items={[["hourglass", "Snap to nearest"], ["arrowUp", "Snap to lines"]]} /></SpreadRow>
                  <Divider />
                  <SpreadRow $w={39}><Tools items={[["planeA", "Snap to geometry", true], ["planeB", "Snap to reference", true]]} /></SpreadRow>
                  <Divider />
                  <Picker w={49} label="Depth" value="Auto" />
                  <Picker w={81} label="Plane" value="View plane" />
                </ButtonRow>
                <Picker w={96} label="Outline" value="Outline planes" />
              </DockRows>
              <IconButton aria-label="Show snapping options"><Glyph name="eye" /></IconButton>
            </DockColumns>
          </DockPanel>
        </BottomBar>

        <StatusBar>
          <span>Database stored</span>
          <span>O</span>
          <span>0</span>
          <span>Pan</span>
          <span>Current phase: 1, Phase 1</span>
          <span>1 + 0 objects selected</span>
        </StatusBar>
      </Page>
    </>
  );
}
